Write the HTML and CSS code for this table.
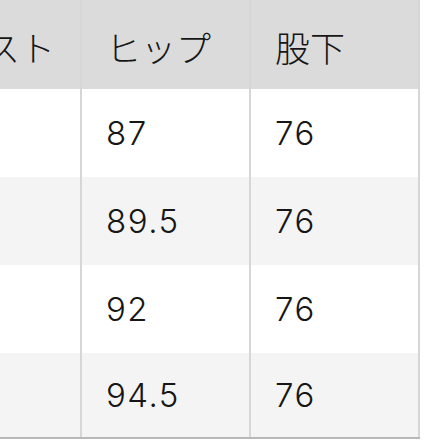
FILE: index.html
```html
<!DOCTYPE html>
<html lang="ja">
<head>
<meta charset="utf-8">
<link rel="stylesheet" href="styles.css">
</head>
<body>
<table class="size-table">
  <thead>
    <tr><th>ウエスト</th><th>ヒップ</th><th>股下</th></tr>
  </thead>
  <tbody>
    <tr><td>70</td><td>87</td><td>76</td></tr>
    <tr class="alt"><td>73</td><td>89.5</td><td>76</td></tr>
    <tr><td>76</td><td>92</td><td>76</td></tr>
    <tr class="alt last"><td>79</td><td>94.5</td><td>76</td></tr>
  </tbody>
</table>
</body>
</html>
```
FILE: styles.css
```css
html, body {
  margin: 0;
  padding: 0;
  background: #ffffff;
  overflow: hidden;
}
.size-table {
  border-collapse: collapse;
  margin-left: -89px;
  table-layout: fixed;
  color: #161616;
}
.size-table th,
.size-table td {
  width: 143px;
  padding: 0 0 0 24px;
  text-align: left;
  vertical-align: middle;
  border-left: 2px solid #d6d6d6;
  border-right: 2px solid #d6d6d6;
}
.size-table th {
  height: 85px;
  background: #dbdbdb;
  color: #161616;
  font-family: "Noto Sans CJK JP", sans-serif;
  font-size: 35px;
  font-weight: 300;
  padding-top: 4px;
  white-space: nowrap;
}
.size-table th:first-child {
  padding-left: 2px;
  width: 165px;
}
.size-table td {
  height: 88px;
  background: #ffffff;
  font-family: Inter, "Liberation Sans", sans-serif;
  font-size: 33px;
  font-weight: 300;
  letter-spacing: 1.5px;
}
.size-table tr.alt td {
  background: #f4f4f4;
}
.size-table tr.last td {
  height: 84px;
  border-bottom: 2px solid #b8b8b8;
}
.size-table td:first-child {
  color: transparent;
}
```
